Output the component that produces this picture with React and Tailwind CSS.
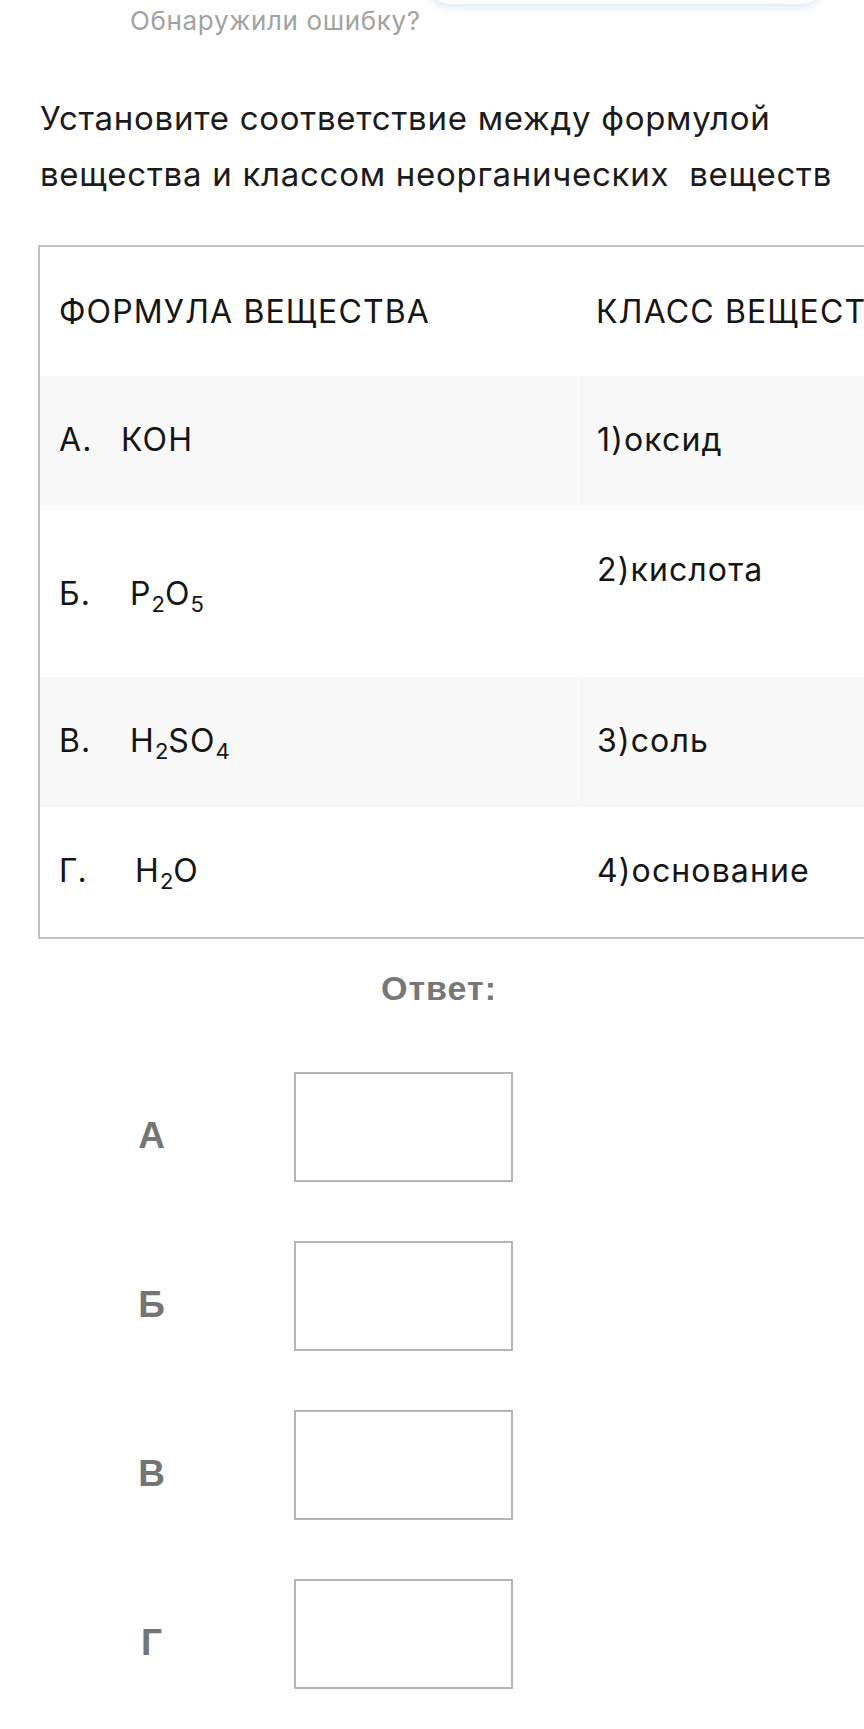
export default function App() {
  const sub = "text-[22px] relative top-[7px] leading-none tracking-normal";
  const rows = [
    {
      bg: "bg-[#f8f8f8]",
      h: "h-[130px]",
      labelW: "w-[62px]",
      label: "А.",
      formula: <span>КОН</span>,
      right: "1)оксид",
      leftPt: "pt-[44px]",
    },
    {
      bg: "bg-white",
      h: "h-[171px]",
      labelW: "w-[71px]",
      label: "Б.",
      formula: (
        <span>
          P<span className={sub}>2</span>O<span className={sub}>5</span>
        </span>
      ),
      right: "2)кислота",
      leftPt: "pt-[68px]",
    },
    {
      bg: "bg-[#f8f8f8]",
      h: "h-[130px]",
      labelW: "w-[71px]",
      label: "В.",
      formula: (
        <span>
          H<span className={sub}>2</span>SO<span className={sub}>4</span>
        </span>
      ),
      right: "3)соль",
      leftPt: "pt-[44px]",
    },
    {
      bg: "bg-white",
      h: "h-[130px]",
      labelW: "w-[76px]",
      label: "Г.",
      formula: (
        <span>
          H<span className={sub}>2</span>O
        </span>
      ),
      right: "4)основание",
      leftPt: "pt-[44px]",
    },
  ];

  const answers = ["А", "Б", "В", "Г"];

  return (
    <div className="w-[864px] min-h-[1729px] overflow-hidden bg-white [font-family:Inter,sans-serif]">
      {/* top strip */}
      <div className="flex h-[44px]">
        <div className="pl-[130px] pt-[5px] text-[26px] leading-[32px] tracking-[0.025em] text-[#a2a2a2] whitespace-nowrap">
          Обнаружили ошибку?
        </div>
        <div className="ml-auto mr-[40px] -mt-[60px] h-[64px] w-[396px] shrink-0 rounded-[22px] bg-white shadow-[0_3px_10px_rgba(120,170,230,0.28)]" />
      </div>

      {/* heading */}
      <h1 className="mt-[46px] pl-[40px] text-[33px] leading-[56px] tracking-[0.022em] font-normal text-[#1b1b1b] whitespace-nowrap">
        Установите соответствие между формулой
        <br />
        вещества и классом неорганических&nbsp; веществ
      </h1>

      {/* table */}
      <div className="mt-[43px] ml-[38px] w-[1120px] border-2 border-[#c2c2c2] text-[32px] leading-[40px] tracking-[0.035em] text-[#151515]">
        <div className="grid h-[129px] grid-cols-[538px_1fr] bg-white">
          <div className="pl-[19px] pt-[45px] whitespace-nowrap">ФОРМУЛА ВЕЩЕСТВА</div>
          <div className="pl-[18px] pt-[45px] whitespace-nowrap">КЛАСС ВЕЩЕСТВА</div>
        </div>
        {rows.map((r, i) => (
          <div key={i} className={`grid grid-cols-[538px_1fr] ${r.h} ${r.bg}`}>
            <div className={`flex pl-[19px] whitespace-nowrap ${r.leftPt}`}>
              <span className={`inline-block ${r.labelW}`}>{r.label}</span>
              {r.formula}
            </div>
            <div className="pl-[18px] pt-[44px] whitespace-nowrap border-l border-[#fdfdfd]">{r.right}</div>
          </div>
        ))}
      </div>

      {/* answer */}
      <div className="mt-[29px] pl-[14px] text-center text-[34px] leading-[40px] tracking-[0.03em] font-bold text-[#777777] [font-family:'Liberation_Sans',Arial,sans-serif]">
        Ответ:
      </div>

      <div className="mt-[64px] flex flex-col gap-[59px]">
        {answers.map((a) => (
          <div key={a} className="flex items-center">
            <div className="ml-[125px] w-[53px] pt-[17px] text-center text-[37px] leading-[48px] font-bold text-[#747474] [font-family:'Liberation_Sans',Arial,sans-serif]">
              {a}
            </div>
            <div className="ml-[116px] h-[110px] w-[219px] border-2 border-[#b5b5b5] bg-white" />
          </div>
        ))}
      </div>
    </div>
  );
}
